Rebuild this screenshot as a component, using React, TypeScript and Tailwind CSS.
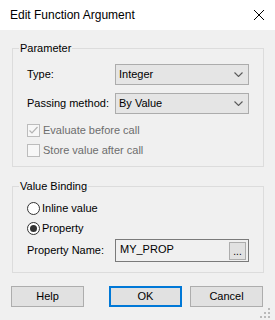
import React from 'react';

const font = { fontFamily: '"Liberation Sans", Arial, sans-serif' };

const Chevron: React.FC = () => (
  <svg width="9" height="5" viewBox="0 0 9 5" className="shrink-0">
    <path d="M0.5 0.5 L4.5 4.5 L8.5 0.5" fill="none" stroke="#5a5a5a" strokeWidth="1.1" />
  </svg>
);

const Combo: React.FC<{ value: string }> = ({ value }) => (
  <div className="flex-1 h-[21px] flex items-center justify-between pl-[3px] pr-[5px] bg-[#e5e5e5] border border-[#acacac] text-black">
    <span>{value}</span>
    <Chevron />
  </div>
);

const Check: React.FC<{ label: string; checked?: boolean }> = ({ label, checked }) => (
  <div className="flex items-center h-[13px] gap-[3px] text-[#6d6d6d]">
    <div className="w-[13px] h-[13px] border border-[#bcbcbc] bg-[#f7f7f7] flex items-center justify-center">
      {checked && (
        <svg width="11" height="11" viewBox="0 0 11 11">
          <path d="M1.5 5.5 L4 8 L9.5 2" fill="none" stroke="#b4b4b4" strokeWidth="1.2" />
        </svg>
      )}
    </div>
    <span>{label}</span>
  </div>
);

const Radio: React.FC<{ label: string; checked?: boolean }> = ({ label, checked }) => (
  <div className="flex items-center h-[13px] gap-[2px] text-black">
    <div className="w-[13px] h-[13px] rounded-full border border-[#333333] bg-white flex items-center justify-center">
      {checked && <div className="w-[7px] h-[7px] rounded-full bg-[#333333]" />}
    </div>
    <span>{label}</span>
  </div>
);

const Button: React.FC<{ label: string; primary?: boolean }> = ({ label, primary }) => (
  <button
    className={
      primary
        ? 'w-[73px] h-[21px] bg-[#e1e1e1] border-2 border-[#0078d7] text-black flex items-center justify-center'
        : 'w-[73px] h-[21px] bg-[#e1e1e1] border border-[#adadad] text-black flex items-center justify-center'
    }
  >
    {label}
  </button>
);

export default function App() {
  return (
    <div className="w-[275px] h-[320px] bg-[#f0f0f0] flex flex-col relative text-[11px] leading-[13px] overflow-hidden" style={font}>
      {/* Title bar */}
      <div className="h-[30px] bg-white flex items-center justify-between pl-[10px] pr-[11px] shrink-0">
        <span className="text-[12px] text-black">Edit Function Argument</span>
        <svg width="10" height="10" viewBox="0 0 10 10">
          <path d="M0 0 L10 10 M10 0 L0 10" stroke="#000" strokeWidth="1" />
        </svg>
      </div>

      <div className="flex flex-col px-[11px]">
        {/* Parameter */}
        <fieldset className="ml-px mt-[12px] border border-[#dcdcdc]">
          <legend className="ml-[6px] px-px text-black">Parameter</legend>
          <div className="flex flex-col px-[14px] pt-[9px] pb-[9px]">
            <div className="flex items-center">
              <span className="w-[88px] text-black">Type:</span>
              <Combo value="Integer" />
            </div>
            <div className="flex items-center mt-[8px]">
              <span className="w-[88px] text-black">Passing method:</span>
              <Combo value="By Value" />
            </div>
            <div className="mt-[10px]">
              <Check label="Evaluate before call" checked />
            </div>
            <div className="mt-[7px]">
              <Check label="Store value after call" />
            </div>
          </div>
        </fieldset>

        {/* Value Binding */}
        <fieldset className="ml-px mt-[13px] border border-[#dcdcdc]">
          <legend className="ml-[6px] px-px text-black">Value Binding</legend>
          <div className="flex flex-col px-[14px] pt-[9px] pb-[10px]">
            <Radio label="Inline value" />
            <div className="mt-[7px]">
              <Radio label="Property" checked />
            </div>
            <div className="flex items-center mt-[4px]">
              <span className="w-[88px] text-black">Property Name:</span>
              <div className="flex-1 h-[23px] flex items-start justify-between pl-[4px] pr-[2px] bg-[#f0f0f0] border border-[#7a7a7a]">
                <span className="mt-[3px] text-black">MY_PROP</span>
                <div className="mt-[2px] w-[17px] h-[18px] bg-[#e1e1e1] border border-[#adadad] flex items-end justify-center pb-[2px] text-[10px] leading-[10px] text-black">
                  ...
                </div>
              </div>
            </div>
          </div>
        </fieldset>

        {/* Buttons */}
        <div className="flex items-center justify-between mt-[13px] pr-px">
          <Button label="Help" />
          <div className="flex gap-[8px]">
            <Button label="OK" primary />
            <Button label="Cancel" />
          </div>
        </div>
      </div>

      {/* Size grip */}
      <svg className="absolute right-0 bottom-0" width="16" height="14" viewBox="0 0 16 14">
        <rect x="9" y="2" width="2" height="2" fill="#bababa" />
        <rect x="5" y="6" width="2" height="2" fill="#bababa" />
        <rect x="9" y="6" width="2" height="2" fill="#bababa" />
        <rect x="1" y="10" width="2" height="2" fill="#bababa" />
        <rect x="5" y="10" width="2" height="2" fill="#bababa" />
        <rect x="9" y="10" width="2" height="2" fill="#bababa" />
      </svg>
    </div>
  );
}
